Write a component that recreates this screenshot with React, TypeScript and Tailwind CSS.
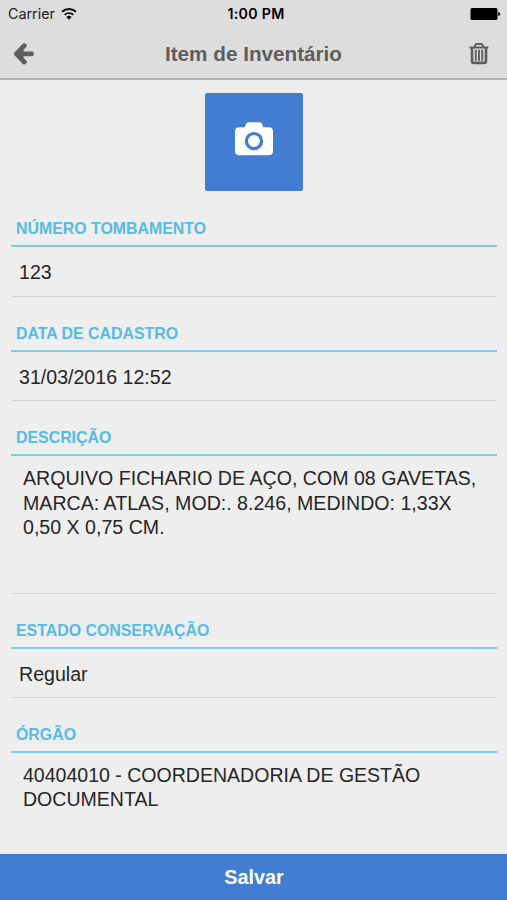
import type { ReactNode } from 'react';

function Wifi() {
  return (
    <svg width="16" height="13" viewBox="0 0 16 13" fill="none" stroke="#111" strokeWidth="1.9">
      <path d="M1 3.8a10.2 10.2 0 0 1 14 0" />
      <path d="M3.6 6.9a6.4 6.4 0 0 1 8.8 0" />
      <path d="M8 11.8 5.3 9a3.8 3.8 0 0 1 5.4 0z" fill="#111" stroke="none" />
    </svg>
  );
}

function Battery() {
  return (
    <svg width="31" height="12" viewBox="0 0 31 12">
      <rect x="0.5" y="0" width="27" height="12" rx="1.6" fill="#000" />
      <path d="M28.3 4v4c1.2-.3 1.9-1 1.9-2s-.7-1.7-1.9-2z" fill="#000" />
    </svg>
  );
}

function BackArrow() {
  return (
    <svg width="22" height="22" viewBox="0 0 22 22" fill="none" stroke="#5e5e5e">
      <path d="M12.3 2.7 4.4 10.9l7.9 8.1" strokeWidth="4.8" strokeLinecap="round" strokeLinejoin="round" />
      <path d="M6 10.9h13.6" strokeWidth="4.8" strokeLinecap="round" />
      <path d="M6 10.9 11 6v9.8z" fill="#5e5e5e" />
    </svg>
  );
}

function Trash() {
  return (
    <svg width="20" height="22" viewBox="0 0 20 22" fill="none" stroke="#5e5e5e">
      <path d="M.6 4.5h18.8" strokeWidth="2" />
      <path d="M5.6 4.1 6.4 1.9q.3-.9 1.2-.9h4.8q.9 0 1.2.9l.8 2.2" strokeWidth="2" />
      <path d="M3 5v13.2q0 1.7 1.7 1.7h10.6q1.7 0 1.7-1.7V5" strokeWidth="2.6" />
      <path d="M6.8 6.8v11M10 6.8v11M13.2 6.8v11" strokeWidth="1.9" />
    </svg>
  );
}

function Camera() {
  return (
    <svg width="38" height="34" viewBox="0 0 38 34">
      <path
        d="M4.5 5.2h5.3l.6-2Q11.2.2 14 .2h10q2.8 0 3.6 3l.6 2h5.5q4.3 0 4.3 4.3v19.4q0 4.3-4.3 4.3H4.5Q0 33.2 0 28.9V9.5Q0 5.2 4.5 5.2z"
        fill="#fff"
      />
      <circle cx="19" cy="19.1" r="7.6" fill="none" stroke="#427dd1" strokeWidth="3.2" />
    </svg>
  );
}

function Field({ label, children }: { label: string; children: ReactNode }) {
  return (
    <section className="mb-[19px]">
      <h2 className="h-[34px] pl-[5px] border-b-2 box-content border-[#7ecae9] text-[15.9px] leading-[36.8px] font-bold text-[#56bbe5] whitespace-nowrap">
        {label}
      </h2>
      {children}
    </section>
  );
}

function InputValue({ value }: { value: string }) {
  return (
    <div className="box-content h-[48.5px] pl-2 border-b border-[#d3d3d3] text-[19.6px] leading-[51px]">{value}</div>
  );
}

export default function App() {
  return (
    <div className="flex flex-col w-full h-[900px] overflow-hidden bg-[#eeeeee] text-[#262626] font-['Liberation_Sans',Arial,sans-serif]">
      <header className="h-20 shrink-0 bg-[#dddddd] border-b-2 border-[#b3b3b3]">
        <div className="grid grid-cols-3 items-center h-7 pl-2 pr-1.5 font-['Inter',sans-serif] text-black">
          <div className="flex items-center gap-1.5 text-[14.3px] text-[#222]">
            <span>Carrier</span>
            <Wifi />
          </div>
          <span className="pl-[3px] text-center text-[14.2px] font-semibold tracking-[0.3px]">1:00 PM</span>
          <div className="flex justify-end">
            <Battery />
          </div>
        </div>
        <div className="flex items-center justify-between h-[51px] pl-3 pr-[18px] text-[#5e5e5e]">
          <button type="button"><BackArrow /></button>
          <h1 className="pl-1 pt-px text-[20.7px] font-bold">Item de Inventário</h1>
          <button type="button"><Trash /></button>
        </div>
      </header>

      <main className="flex-1 min-h-0 pt-[13px] pl-[11px] pr-2.5">
        <button type="button" className="flex items-center justify-center w-[98px] h-[98px] mx-auto mb-[20.25px] pb-1.5 rounded-[2px] bg-[#427dd1]">
          <Camera />
        </button>

        <Field label="NÚMERO TOMBAMENTO">
          <InputValue value="123" />
        </Field>
        <Field label="DATA DE CADASTRO">
          <InputValue value="31/03/2016 12:52" />
        </Field>
        <Field label="DESCRIÇÃO">
          <div className="box-content h-[126.5px] pt-2.5 pl-3 border-b border-[#d3d3d3] text-[19.6px] leading-[24.4px] whitespace-nowrap">
            ARQUIVO FICHARIO DE AÇO, COM 08 GAVETAS,<br />
            MARCA: ATLAS, MOD:. 8.246, MEDINDO: 1,33X<br />
            0,50 X 0,75 CM.
          </div>
        </Field>
        <Field label="ESTADO CONSERVAÇÃO">
          <InputValue value="Regular" />
        </Field>
        <Field label="ÓRGÃO">
          <div className="pt-2.5 pl-3 text-[19.55px] leading-[24.2px]">
            40404010 - COORDENADORIA DE GESTÃO<br />
            DOCUMENTAL
          </div>
        </Field>
      </main>

      <button type="button" className="h-[46px] shrink-0 pt-px pl-px bg-[#427dd1] text-white text-[19.8px] font-bold">
        Salvar
      </button>
    </div>
  );
}
